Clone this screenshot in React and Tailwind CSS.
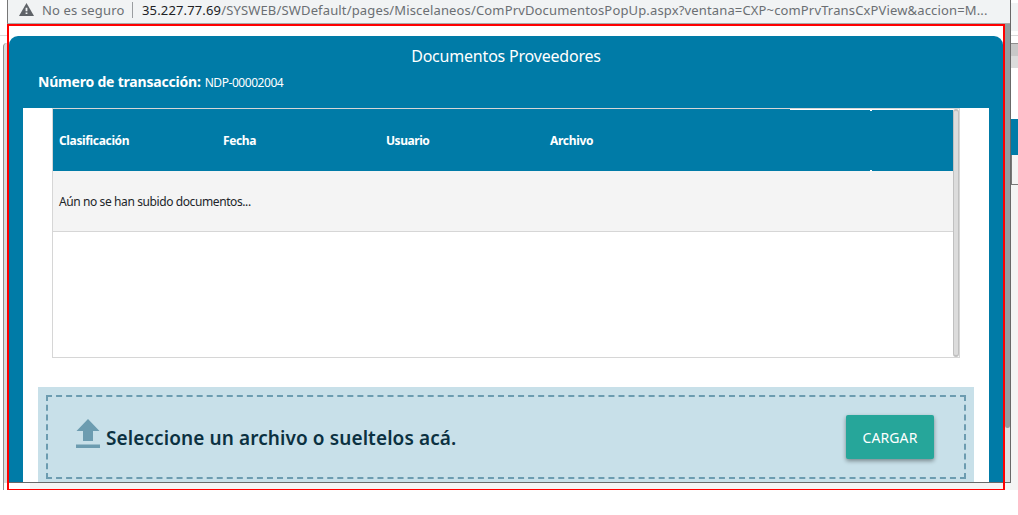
const headings = [
  { label: "Clasificación", cls: "w-[164px] tracking-[-0.35px]" },
  { label: "Fecha", cls: "w-[163px] tracking-[-0.4px]" },
  { label: "Usuario", cls: "w-[164px] tracking-[-0.45px]" },
  { label: "Archivo", cls: "w-[241px] tracking-[-0.3px]" },
];

function AddressBar() {
  return (
    <header className="flex h-6 items-start border-b border-l border-[#a9a9a9] border-l-[#777] bg-[#f1f3f4] pl-[11px] text-[14px] leading-[21px] text-[#6b6f73]">
      <svg className="mt-[3px] mr-2 h-[13px] w-[15px] shrink-0" viewBox="0 0 15 13">
        <path d="M7.5 0 15 13H0z" fill="#5f6368" />
        <path d="M6.6 4.8h1.8v3.4H6.6zM6.6 9.4h1.8v1.7H6.6z" fill="#f1f3f4" />
      </svg>
      <span className="w-[90px] shrink-0 whitespace-nowrap text-[13px] tracking-[0.15px]">No es seguro</span>
      <span className="mt-[2px] mr-[9px] h-4 w-px shrink-0 bg-[#9a9da0]" />
      <span className="whitespace-nowrap text-[13px] tracking-[0.15px]">
        <span className="text-[#202124]">35.227.77.69</span>
        <span>/SYSWEB/SWDefault/pages/Miscelaneos/ComPrvDocumentosPopUp.aspx?ventana=CXP~comPrvTransCxPView&amp;accion=M...</span>
      </span>
    </header>
  );
}

function DocumentsTable() {
  return (
    <div className="ml-[29px] flex h-[250px] w-[908px] border border-[#d6d6d6]">
      <div className="w-[900px]">
        <div className="relative flex h-[62px] items-center bg-[#007ba7] pl-[6px] pt-[2px] text-[12px] font-bold text-white">
          {headings.map((h) => (
            <span key={h.label} className={h.cls}>{h.label}</span>
          ))}
          <span className="absolute top-0 right-0 h-px w-[163px] bg-white" />
          <span className="absolute top-0 right-[81px] h-[2px] w-[2px] bg-white" />
          <span className="absolute right-[81px] bottom-0 h-px w-[2px] bg-white" />
        </div>
        <div className="flex h-[61px] items-center border-b border-[#d6d6d6] bg-[#f4f4f4] pt-[2px] pl-[6px] text-[12px] tracking-[-0.4px] text-[#212529]">
          Aún no se han subido documentos...
        </div>
      </div>
      <div className="h-[248px] w-[6px] rounded-full border-x border-t-2 border-b-2 border-[#c0c0c0] bg-[#dcdcdc]" />
    </div>
  );
}

function DropZone() {
  return (
    <div className="mt-[29px] ml-[15px] h-[95px] w-[936px] overflow-hidden bg-[#c8e0e9] p-2">
      <div className="flex h-[84px] items-center border-2 border-dashed border-[#6c9cb0] pl-7 pr-[30px]">
        <svg className="mt-[-8px] h-[29px] w-6" viewBox="0 0 24 29">
          <path d="M12 0 23.5 12H17v10H7V12H.5zM0 25.5h24V29H0z" fill="#6c9cb0" />
        </svg>
        <span className="mt-[2px] ml-[6px] whitespace-nowrap text-[19px] font-semibold tracking-[0.1px] text-[#0b3141]">
          Seleccione un archivo o sueltelos acá.
        </span>
        <button className="ml-auto h-[44px] w-[88px] rounded-[2px] bg-[#26a69a] text-[14px] tracking-[0.1px] text-white shadow-[0_2px_4px_rgba(0,0,0,0.4)]">
          CARGAR
        </button>
      </div>
    </div>
  );
}

export default function App() {
  return (
    <div className="relative flex h-[515px] w-[1018px] flex-col overflow-hidden bg-white font-['Noto_Sans','Open_Sans',sans-serif]">
      <div className="flex h-[483px]">
        <aside className="flex w-[7px] flex-col">
          <div className="h-[36px] border-b border-[#d9d9d9]" />
          <div className="mt-[7px] ml-[3px] flex-1 rounded-tl-[6px] border-l border-[#8f8f8f] bg-[#dcdcdc]" />
        </aside>
        <section className="flex w-[1004px] flex-col border-r border-b border-[#686868]">
          <AddressBar />
          <div className="flex h-[458px]">
            <main className="w-[998px] bg-white pt-3 pl-[2px]">
              <div className="h-[446px] w-[994px] rounded-t-[9px] bg-[#007ba7] pt-[10px] text-white">
                <h1 className="h-[20px] text-center text-[16px] leading-[20px] tracking-[-0.2px]">Documentos Proveedores</h1>
                <p className="flex h-[42px] items-baseline pl-[29px] pt-[4px] whitespace-nowrap">
                  <b className="text-[14px] leading-[24px] tracking-[-0.2px]">Número de transacción:</b>
                  <span className="ml-1 text-[12px] tracking-[-0.45px]">NDP-00002004</span>
                </p>
                <div className="ml-[14px] h-[374px] w-[966px] bg-white text-black">
                  <DocumentsTable />
                  <DropZone />
                </div>
              </div>
            </main>
            <div className="w-[5px] bg-[#dedede]">
              <div className="h-[404px] rounded-b-[3px] bg-[#949b9d]" />
            </div>
          </div>
        </section>
        <aside className="w-[7px] bg-[#f4f4f4]">
          <div className="h-[3px] bg-white" />
          <div className="h-[28px] bg-[#f1f3f4]" />
          <div className="h-[12px] bg-white pt-1"><div className="h-px bg-[#d9d9d9]" /></div>
          <div className="h-[13px] border-t border-[#8f8f8f] bg-[#c8c8c8]" />
          <div className="h-[12px] bg-[#dcdcdc]" />
          <div className="h-[51px] bg-white" />
          <div className="h-[36px] bg-[#007ba7]" />
          <div className="h-[30px] border-b border-l border-[#777] bg-[#f4f4f4]" />
        </aside>
      </div>
      <div className="ml-[3px] flex h-[7px] border-l border-[#8f8f8f] bg-[#f4f4f4]">
        <div className="w-[26px] bg-white" />
      </div>
      <div className="pointer-events-none absolute top-6 left-[7px] h-[466px] w-[998px] border-2 border-b border-[#ff0000]" />
    </div>
  );
}
